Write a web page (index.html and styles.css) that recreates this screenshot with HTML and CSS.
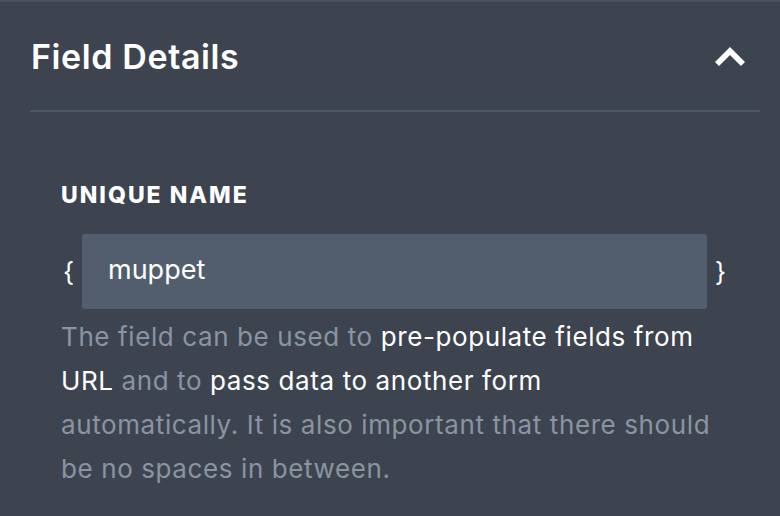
FILE: index.html
```html
<!DOCTYPE html>
<html>
<head>
<meta charset="utf-8">
<link rel="stylesheet" href="styles.css">
</head>
<body>
<div class="panel">
  <div class="header">
    <h2 class="title">Field Details</h2>
    <svg class="chevron" width="30" height="20" viewBox="0 0 30 20" aria-hidden="true">
      <path d="M15 0 L30 15 L26 19 L15 8 L4 19 L0 15 Z" fill="#ffffff"/>
    </svg>
  </div>
  <div class="content">
    <div class="label">UNIQUE NAME</div>
    <div class="input-row">
      <span class="brace">{</span>
      <div class="input">muppet</div>
      <span class="brace">}</span>
    </div>
    <p class="help">The field can be used to <span class="hl">pre-populate fields from URL</span> and to <span class="hl">pass data to another form</span> automatically. It is also important that there should be no spaces in between.</p>
  </div>
</div>
</body>
</html>
```
FILE: styles.css
```css
* { box-sizing: border-box; }
html, body {
  margin: 0;
  padding: 0;
  background: #3d4450;
  font-family: Inter, "Noto Sans", sans-serif;
  color: #ffffff;
}
.panel {
  border-top: 2px solid #4a5260;
  padding: 0 20px 0 30px;
  height: 516px;
  overflow: hidden;
}
.header {
  display: flex;
  justify-content: space-between;
  align-items: center;
  padding: 35px 0 33px 0;
  border-bottom: 2px solid #4d5866;
}
.title {
  margin: 0 0 0 1px;
  font-size: 34px;
  line-height: 40px;
  font-weight: 600;
  letter-spacing: 0.6px;
}
.chevron {
  display: block;
  margin-right: 15px;
}
.content {
  margin-left: 31px;
  width: 670px;
  padding-top: 70px;
}
.label {
  font-size: 23px;
  line-height: 26px;
  font-weight: 800;
  letter-spacing: 2px;
}
.input-row {
  display: flex;
  align-items: center;
  margin-top: 26px;
}
.brace {
  font-size: 26px;
  width: 21px;
  flex: 0 0 auto;
  padding-left: 2px;
}
.brace:last-child {
  padding-left: 8px;
  width: 24px;
}
.input {
  width: 627px;
  height: 75px;
  background: #525e6e;
  border-radius: 3px;
  display: flex;
  align-items: center;
  padding: 0 0 4px 26px;
  font-size: 27px;
}
.help {
  margin: 6px 0 0 0;
  width: 664px;
  font-size: 26px;
  line-height: 44px;
  letter-spacing: 0.6px;
  color: #8a94a2;
}
.hl {
  color: #ffffff;
}
```
